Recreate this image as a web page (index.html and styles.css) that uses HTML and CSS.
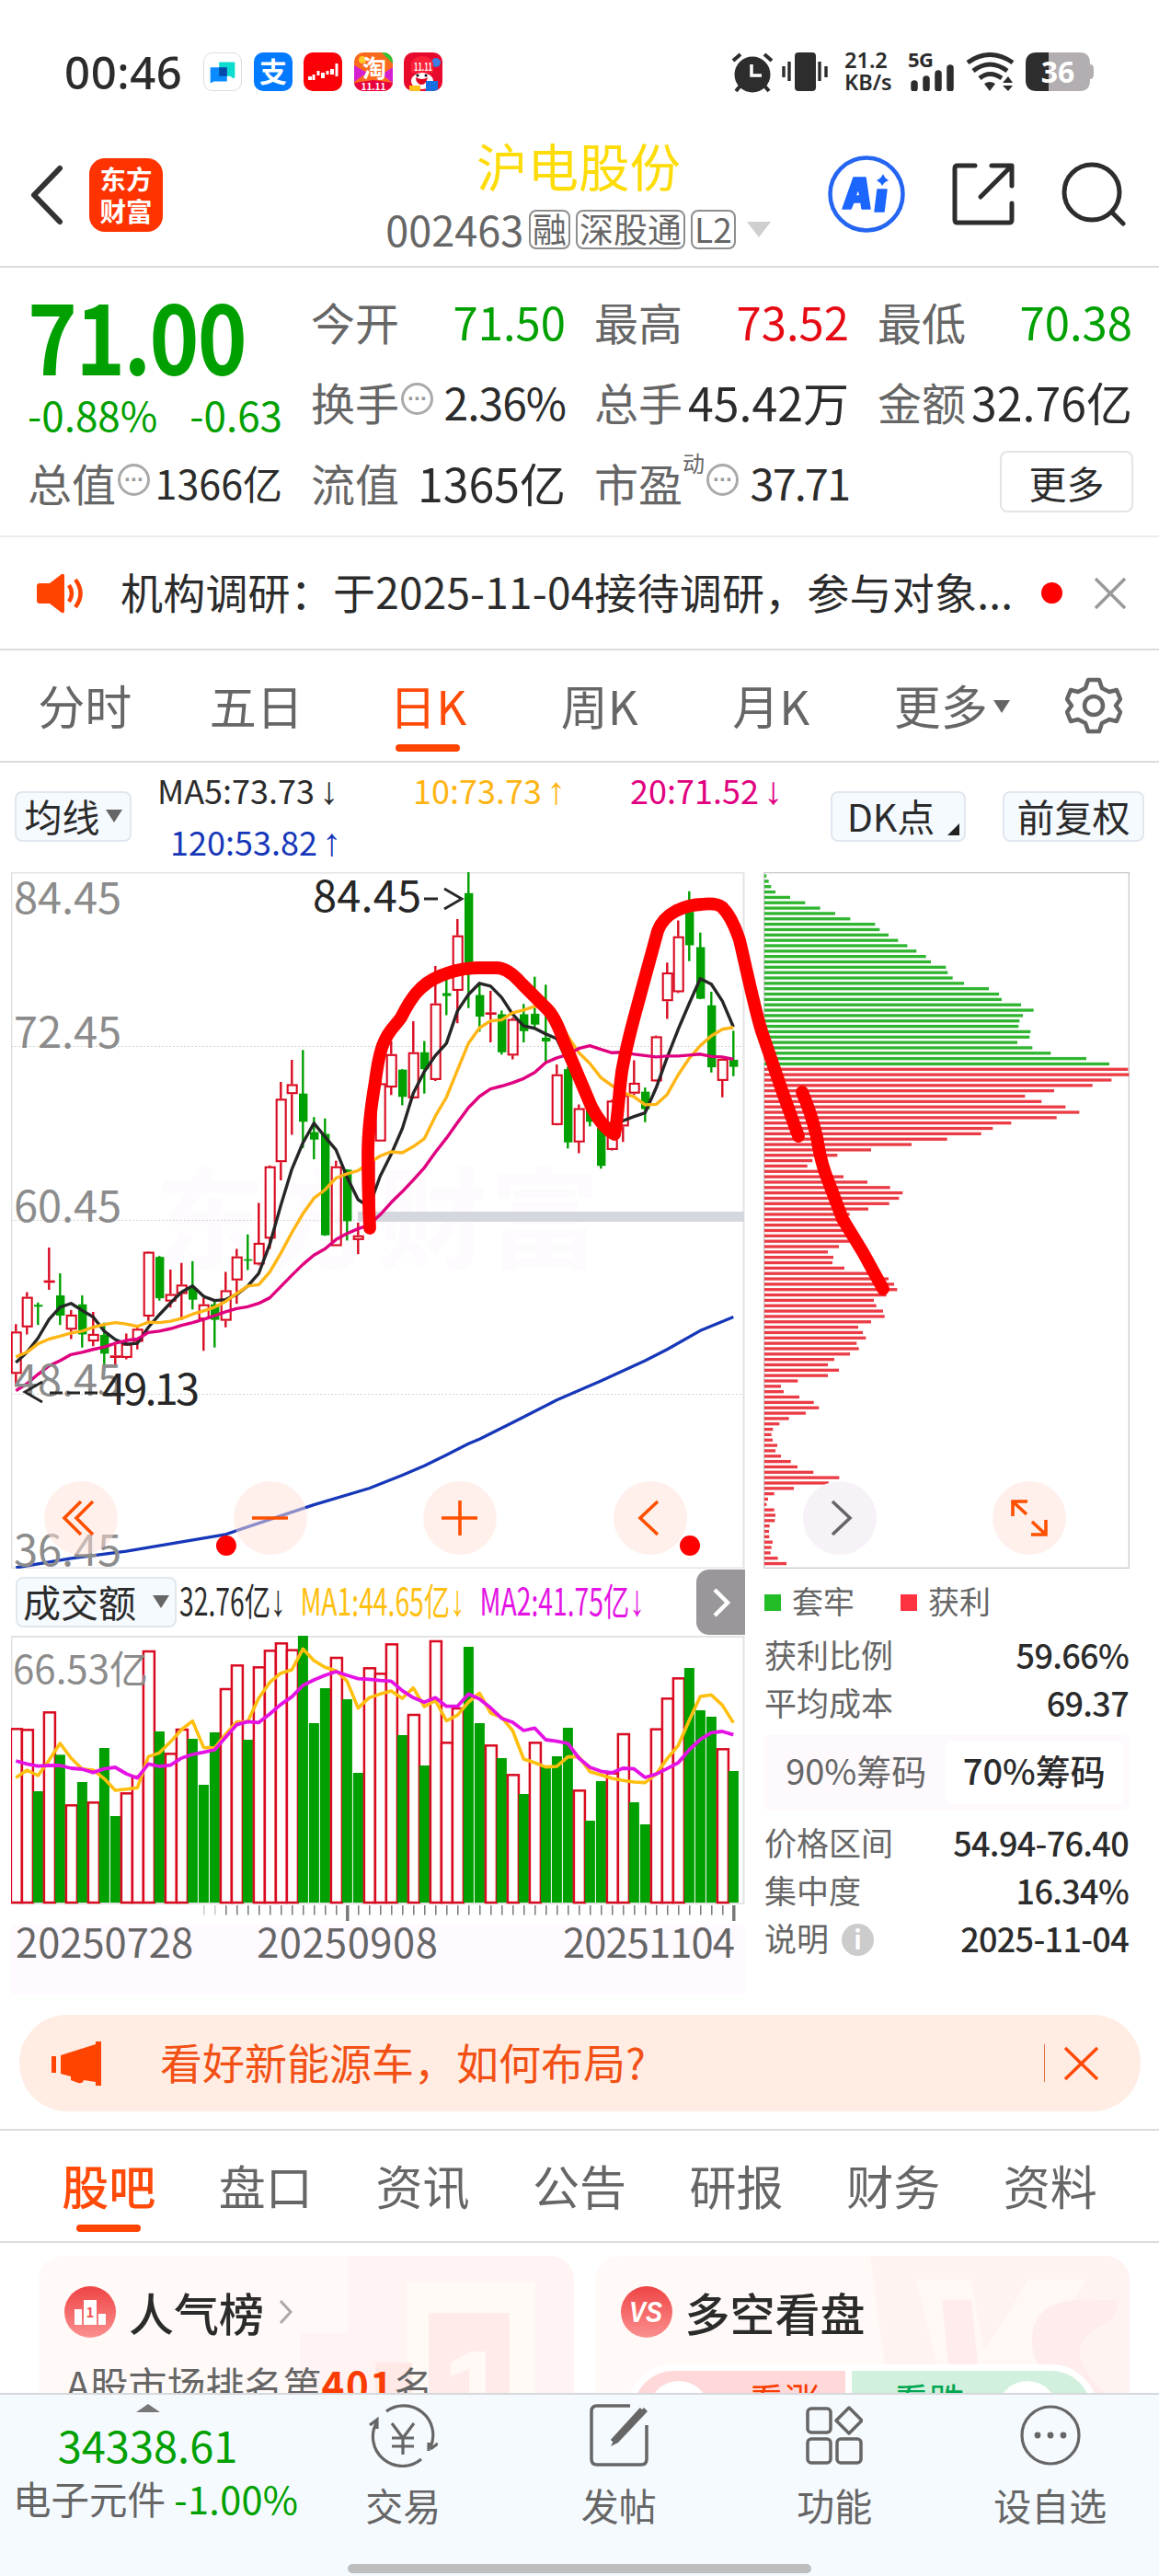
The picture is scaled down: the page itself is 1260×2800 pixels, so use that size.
FILE: index.html
```html
<!DOCTYPE html>
<html lang="zh-CN">
<head>
    <meta charset="UTF-8">
    <meta name="viewport" content="width=device-width, initial-scale=1.0">
    <title>沪电股份 002463</title>
    <link rel="stylesheet" href="styles.css">
</head>
<body>
    <!-- 状态栏 -->
    <div class="status">
        <span class="clock">00:46</span>
        <div class="apps">
            <svg class="app app-white" viewBox="0 0 42 42"><path d="M17 10h18v18h-3l-2-2H17z" fill="#0cdccf"/><path d="M7 16h19v16H11l-4 2z" fill="#0a8bff"/><path d="M17 16h9v10h-9z" fill="#044aa8"/></svg>
            <svg class="app" viewBox="0 0 42 42"><rect width="42" height="42" fill="#027aff"/><text x="21" y="32" font-size="30" font-weight="700" text-anchor="middle" fill="#fff">支</text></svg>
            <svg class="app" viewBox="0 0 42 42"><rect width="42" height="42" fill="#fb0007"/><g fill="#fff"><path d="M5 26h4v4H5zM19 22h4v6h-4zM29 18h4v6h-4z"/></g><path d="M11 24v6M16 20v5M26 20v4M36 12v14" stroke="#fff" stroke-width="3" fill="none"/></svg>
            <svg class="app" viewBox="0 0 42 42"><rect width="42" height="42" fill="#fb6a1c"/><path d="M0 14l14 8-14 10zM42 16L30 24l12 9z" fill="#d31fd0"/><path d="M30 0h12v12z" fill="#2fc437"/><circle cx="9" cy="8" r="4" fill="#ffc928"/><path d="M0 33l21-3 21 3v9H0z" fill="#e8003c"/><text x="22" y="27" font-size="26" font-weight="700" text-anchor="middle" fill="#fff">淘</text><text x="21" y="41" font-size="10" font-weight="700" text-anchor="middle" fill="#fff">11.11</text></svg>
            <svg class="app" viewBox="0 0 42 42"><rect width="42" height="42" fill="#e80a2c"/><circle cx="35" cy="11" r="5" fill="#3b7de0"/><path d="M8 22V12q3-8 12-8t12 8v10z" fill="#fb2238"/><text x="21" y="20" font-size="11" font-weight="700" text-anchor="middle" fill="#fff" textLength="20" lengthAdjust="spacingAndGlyphs">11.11</text><ellipse cx="20" cy="31" rx="12" ry="9" fill="#fff"/><path d="M13 27q7 4 13 0-2 9-8 8-5-2-5-8z" fill="#e2001f"/><circle cx="15" cy="25" r="1.5"/><circle cx="24" cy="25" r="1.5"/><path d="M6 36h12v6H6z" fill="#ffc21a"/><path d="M24 31h13v11H24z" fill="#1a6fe0"/></svg>
        </div>
        <div class="signals">
            <svg width="46" height="44" viewBox="0 0 46 44"><circle cx="23" cy="24" r="19.5" fill="#2d2d2d"/><path d="M2 9l8-7M44 9l-8-7M5 42l6-7M41 42l-6-7" stroke="#2d2d2d" stroke-width="4"/><path d="M22 13v12h11" stroke="#fff" stroke-width="3.5" fill="none"/></svg>
            <svg class="vib" width="50" height="42" viewBox="0 0 50 42"><rect x="14" width="23" height="42" rx="4" fill="#2d2d2d"/><path d="M2 15v12M8 10v21M41 10v21M48 15v12" stroke="#2d2d2d" stroke-width="3.4"/></svg>
            <span class="speed">21.2<br>KB/s</span>
            <svg width="52" height="42" viewBox="0 0 52 42"><text x="0" y="16" font-size="22" font-weight="700" fill="#2d2d2d" textLength="28" font-family="Noto Sans">5G</text><path d="M7 34v5M20 29v10M33 23v16M46 17v22" stroke="#2d2d2d" stroke-width="7.5" stroke-linecap="round"/></svg>
            <svg class="wifi" width="54" height="42" viewBox="0 0 54 42"><path d="M2 11q24-17 49 0M8 20q18-14 37 0M15 28q11-9 24 0" stroke="#2d2d2d" stroke-width="5" fill="none"/><path d="M20 34q6-4 12 0l-6 8zM40 33l6-7 5 7zM40 36h11l-5 6z" fill="#2d2d2d"/></svg>
            <svg width="75" height="42" viewBox="0 0 75 42"><path d="M12 0h13v42H12Q0 42 0 30V12Q0 0 12 0z" fill="#2d2d2d"/><path d="M25 0h34q11 0 11 12v1q4 0 4 5v6q0 5-4 5v1q0 12-11 12H25z" fill="#b3aeb2"/><text x="35" y="33" font-size="32" font-weight="700" text-anchor="middle" fill="#fff" font-family="Open Sans">36</text></svg>
        </div>
    </div>

    <!-- 顶部标题 -->
    <header>
        <svg class="back" width="40" height="66" viewBox="0 0 40 66"><path d="M35 4L7 33l28 29" fill="none" stroke="#333" stroke-width="6" stroke-linecap="round" stroke-linejoin="round"/></svg>
        <div class="logo">东方<br>财富</div>
        <div class="stock">
            <h1>沪电股份</h1>
            <div class="code">002463<span class="tag">融</span><span class="tag">深股通</span><span class="tag">L2</span><i class="down"></i></div>
        </div>
        <div class="tools">
            <svg width="84" height="84" viewBox="0 0 84 84"><circle cx="42" cy="42" r="39.5" fill="none" stroke="#2466f2" stroke-width="4.5"/><path d="M28 24h13l5 34h-9l-1-7h-8l-3 7h-9zM33 36l-3 8h5zM54 37h10l-3 24h-10z" fill="#1b66ff" stroke="#1b66ff" stroke-width="1.5" stroke-linejoin="round" fill-rule="evenodd"/><path d="M60 20q2 5 6 7-5 2-7 6-2-4-6-6 5-2 7-7z" fill="#1b66ff"/></svg>
            <svg width="68" height="68" viewBox="0 0 68 68" fill="none" stroke="#2d2d2d" stroke-width="5" stroke-linecap="round" stroke-linejoin="round"><path d="M25 3H6Q3 3 3 6v56q0 3 3 3h56q3 0 3-3V44M43 3h22v22M64 4L31 37"/></svg>
            <svg width="70" height="70" viewBox="0 0 70 70" fill="none" stroke="#2d2d2d" stroke-width="5" stroke-linecap="round"><circle cx="33" cy="33" r="30"/><path d="M55 55l12 12"/></svg>
        </div>
    </header>

    <!-- 行情 -->
    <section class="quote">
        <div class="price">71.00</div>
        <div class="cell"><span>今开</span><b class="green">71.50</b></div>
        <div class="cell"><span>最高</span><b class="red">73.52</b></div>
        <div class="cell"><span>最低</span><b class="green">70.38</b></div>
        <div class="cell change"><b class="green">-0.88%</b><b class="green">-0.63</b></div>
        <div class="cell"><span>换手<i class="dots">···</i></span><b class="m">2.36%</b></div>
        <div class="cell"><span>总手</span><b class="w">45.42万</b></div>
        <div class="cell"><span>金额</span><b class="w">32.76亿</b></div>
        <div class="cell"><span>总值<i class="dots">···</i></span><b class="s">1366亿</b></div>
        <div class="cell"><span>流值</span><b class="w">1365亿</b></div>
        <div class="cell"><span>市盈<sup>动</sup><i class="dots">···</i></span><b class="pe">37.71</b></div>
        <div class="cell last"><button class="more">更多</button></div>
    </section>

    <!-- 公告 -->
    <section class="notice">
        <svg width="52" height="44" viewBox="0 0 52 44"><path d="M3 11h11L27 1q3-1 3 2v38q0 3-3 2L14 33H3q-3 0-3-3V14q0-3 3-3z" fill="#ff4400"/><path d="M35 13q6 9 0 18M42 7q11 15 0 30" fill="none" stroke="#ff4400" stroke-width="4.5"/></svg>
        <p>机构调研：于2025-11-04接待调研，参与对象...</p>
        <i class="dot"></i>
        <svg width="36" height="36" viewBox="0 0 36 36"><path d="M2 2l32 32M34 2L2 34" stroke="#999" stroke-width="3.5"/></svg>
    </section>

    <!-- 周期 -->
    <nav class="period">
        <a>分时</a><a>五日</a><a class="on">日K</a><a>周K</a><a>月K</a><a>更多<i class="tri"></i></a>
        <svg width="62" height="62" viewBox="0 0 62 62" fill="none" stroke="#666" stroke-width="4.5" stroke-linejoin="round"><path d="M25 3h12l3 9 8 4 8-2 4 10-5 7 5 7-4 10-8-2-8 4-3 9H25l-3-9-8-4-8 2-4-10 5-7-5-7 4-10 8 2 8-4z"/><circle cx="31" cy="31" r="10"/></svg>
    </nav>

    <!-- 均线指标 -->
    <section class="indicators">
        <button class="pill">均线<i class="tri"></i></button>
        <div class="ma">
            <span>MA5:73.73<em>↓</em></span>
            <span class="c10">10:73.73<em>↑</em></span>
            <span class="c20">20:71.52<em>↓</em></span>
            <span class="c120">120:53.82<em>↑</em></span>
        </div>
        <button class="pill dk">DK点<i class="corner"></i></button>
        <button class="pill fq">前复权</button>
    </section>

    <!-- K线 + 筹码 -->
    <section class="charts">
        <div class="left">
            <svg id="kline" width="798" height="757" viewBox="12 948 798 757"></svg>
            <div class="vol-head">
                <button class="pill">成交额<i class="tri"></i></button>
                <div class="vol-ma"><span>32.76亿<em>↓</em></span><span class="v1">MA1:44.65亿<em>↓</em></span><span class="v2">MA2:41.75亿<em>↓</em></span></div>
                <div class="next"><svg width="22" height="34" viewBox="0 0 22 34"><path d="M4 3l14 14L4 31" fill="none" stroke="#fff" stroke-width="4.5"/></svg></div>
            </div>
            <svg id="volume" width="798" height="314" viewBox="12 1778 798 314"></svg>
            <div class="dates"><span>20250728</span><span>20250908</span><span>20251104</span></div>
        </div>
        <div class="right">
            <svg id="chips" width="398" height="757" viewBox="830 948 398 757"></svg>
            <div class="legend"><i class="sq g"></i>套牢<i class="sq r"></i>获利</div>
            <div class="row"><span>获利比例</span><b>59.66%</b></div>
            <div class="row"><span>平均成本</span><b>69.37</b></div>
            <div class="toggle"><span>90%筹码</span><b>70%筹码</b></div>
            <div class="row"><span>价格区间</span><b>54.94-76.40</b></div>
            <div class="row"><span>集中度</span><b>16.34%</b></div>
            <div class="row"><span>说明<i class="info">i</i></span><b>2025-11-04</b></div>
        </div>

        <div class="controls">
            <a><svg viewBox="0 0 80 80"><path d="M40 22L22 40l18 18M53 22L35 40l18 18"/></svg></a>
            <a><svg viewBox="0 0 80 80"><path d="M20 40h39"/></svg></a>
            <a><svg viewBox="0 0 80 80"><path d="M20 40h39M40 21v38"/></svg></a>
            <a><svg viewBox="0 0 80 80"><path d="M48 22L29 40l19 18"/></svg></a>
            <a class="gray"><svg viewBox="0 0 80 80"><path d="M32 22l19 18-19 18"/></svg></a>
            <a><svg viewBox="0 0 80 80"><path d="M37 36L22 22M38 22H22v16M43 44l15 14M42 58h16V42" stroke-width="4.4"/></svg></a>
        </div>

        <!-- 手绘标记 -->
        <svg class="marks" width="1260" height="757" viewBox="0 948 1260 757">
            <g fill="none" stroke="#ff0000" stroke-width="13.8" stroke-linecap="round" stroke-linejoin="round">
                <path d="M402 1335Q400 1290 400 1256T408 1175Q412 1145 417 1134C422 1120 430 1115 436 1106C446 1086 456 1070 478 1061Q500 1052 520 1052H540Q552 1052 567 1069L595 1097Q604 1106 613 1132L643 1203Q655 1226 668 1233C672 1215 672 1195 676 1165C682 1130 690 1105 697 1078L715 1012Q720 998 735 990Q750 983 763 983Q778 981 785 986Q796 997 804 1022C813 1060 820 1095 828 1121L850 1185L868 1235"/>
                <path d="M872 1187Q882 1210 888 1236Q892 1262 899 1280L916 1325L938 1361L960 1401"/>
            </g>
            <circle cx="246" cy="1680" r="11" fill="#ff0000"/>
            <circle cx="750" cy="1680" r="11" fill="#ff0000"/>
        </svg>
    </section>

    <!-- 广告条 -->
    <div class="banner">
        <svg width="54" height="48" viewBox="0 0 54 48" fill="#ff4400"><path d="M0 16h5v18H0zM10 15L48 3V0h6v48h-6v-4l-13-2q-1 4-6 3l-8-3v-4l-11-3z"/></svg>
        <p>看好新能源车，如何布局?</p>
        <i></i>
        <svg width="40" height="38" viewBox="0 0 40 38"><path d="M2 2l35 34M37 2L2 36" stroke="#ff4a08" stroke-width="3.5"/></svg>
    </div>

    <nav class="tabs">
        <a class="on">股吧</a><a>盘口</a><a>资讯</a><a>公告</a><a>研报</a><a>财务</a><a>资料</a>
    </nav>

    <section class="cards">
        <div class="card">
            <svg class="deco" width="582" height="149" viewBox="0 0 582 149"><path d="M336 0h246v149H284V84h52z" fill="#ffeff0" opacity=".6"/><path d="M400 28h140v121H400z" fill="#fffaf5"/><path d="M424 62h88v87h-88z" fill="#ffecea"/><path d="M448 116l22-12h16v45h-18v-26l-20 8z" fill="#fff8f4"/><path d="M366 116h40v33h-40z" fill="#ffe9e6"/></svg>
            <h3><svg width="56" height="56" viewBox="0 0 56 56"><circle cx="28" cy="28" r="28" fill="url(#rg)"/><path d="M11 25h8v17h-8zM21 15h14v27H21zM37 30h8v12h-8z" fill="#fff"/><text x="28" y="34" font-size="15" font-weight="700" text-anchor="middle" fill="#f05050">1</text></svg>人气榜<svg class="go" width="18" height="28" viewBox="0 0 18 28"><path d="M3 2l11 12L3 26" fill="none" stroke="#aaa" stroke-width="3"/></svg></h3>
            <p>A股市场排名第<b>401</b>名</p>
        </div>
        <div class="card">
            <svg class="deco" width="582" height="149" viewBox="0 0 582 149"><path d="M300 0h282v149H320z" fill="#ffefef" opacity=".7"/><path d="M350 26h60l14 78 48-78h62l-70 123H380z" fill="#fff8f5"/><path d="M378 48h32l10 101h-32zM548 48q-76-6-72 50 2 20 30 51h50q-52-46-8-72 24-8 20-29z" fill="#ffecec"/></svg>
            <h3><svg width="56" height="56" viewBox="0 0 56 56"><defs><linearGradient id="rg" x2="0" y2="1"><stop offset="0" stop-color="#ef4444"/><stop offset="1" stop-color="#fb9090"/></linearGradient></defs><circle cx="28" cy="28" r="28" fill="url(#rg)"/><text x="27" y="39" font-size="31" font-weight="700" font-style="italic" font-family="Liberation Sans" textLength="36" lengthAdjust="spacingAndGlyphs" text-anchor="middle" fill="#fff">VS</text></svg>多空看盘</h3>
            <div class="vs"><div class="up"><i></i>看涨</div><div class="dn">看跌<i></i></div></div>
        </div>
    </section>

    <!-- 底部导航 -->
    <footer>
        <div class="index">
            <i class="upt"></i>
            <strong>34338.61</strong>
            <p>电子元件 <b>-1.00%</b></p>
        </div>
        <a><svg width="76" height="70" viewBox="0 0 76 70" fill="none" stroke="#666" stroke-width="3.2"><path d="M20 9A32 32 0 0 1 68 48M58 61A32 32 0 0 1 10 20M68 50l8-6M66 52l0-9M2 24l8-6v10M26 22l12 16 12-16M38 38v18M26 38h24M26 47h24"/></svg>交易</a>
        <a><svg width="64" height="68" viewBox="0 0 64 68" fill="none" stroke="#666" stroke-width="3.5"><path d="M44 2H8Q2 2 2 8v52q0 6 6 6h48q6 0 6-6V23"/><path d="M59 4L27 38l-4 8 8-4L63 8z" fill="#666" stroke="none"/><path d="M57 6L25 41" stroke-width="6"/></svg>发帖</a>
        <a><svg width="62" height="66" viewBox="0 0 62 66" fill="none" stroke="#666" stroke-width="3.5"><rect x="2" y="4" width="25" height="26" rx="4"/><rect x="2" y="37" width="25" height="26" rx="4"/><rect x="34" y="37" width="26" height="26" rx="4"/><path d="M47 3l14 14-14 14-14-14z" stroke-linejoin="round"/></svg>功能</a>
        <a><svg width="66" height="66" viewBox="0 0 66 66"><circle cx="33" cy="33" r="31" fill="none" stroke="#666" stroke-width="3.2"/><g fill="#666"><circle cx="19" cy="33" r="3.4"/><circle cx="33" cy="33" r="3.4"/><circle cx="47" cy="33" r="3.4"/></g></svg>设自选</a>
        <div class="home"></div>
    </footer>

    <script>
        const X0 = 17.3, STEP = 12;
        const GREEN = "#00a000", RED = "#d90a20";
        const cx = i => X0 + i * STEP;
        const py = v => 930 + v / 1.96;      // 价格区
        const vy = v => 1700 + v / 3;        // 成交额区

        // [涨跌, 最高, 最低, 实体上, 实体下]
        const candles = [
            ["r",998,1126,1014,1104],["r",930,1020,940,1005],["g",952,1000,957,961],["r",835,925,905,910],["g",890,1000,937,980],
            ["r",968,1030,978,1010],["g",937,1048,956,1020],["r",972,1045,1019,1035],["g",995,1085,1021,1061],["r",1042,1085,1065,1070],
            ["r",1018,1073,1040,1070],["r",1003,1052,1008,1036],["r",843,995,844,982],["g",853,948,855,943],["r",882,963,934,950],
            ["r",868,990,914,934],["g",864,967,922,946],["r",943,1055,956,988],["g",950,1048,956,989],["r",887,1005,926,991],
            ["r",838,955,854,905],["g",807,883,860,863],["r",740,873,825,871],["r",660,838,662,816],["r",482,692,518,653],
            ["r",435,595,487,508],["g",414,623,507,567],["g",557,647,589,605],["g",560,810,593,809],["r",650,832,662,832],
            ["g",668,820,669,779],["r",782,849,809,819],["r",640,790,650,780],["r",480,609,485,609],["r",395,510,423,494],
            ["g",455,532,456,514],["r",353,518,419,517],["g",395,507,419,455],["r",235,480,315,478],["g",255,340,293,299],
            ["r",135,357,170,288],["g",35,325,80,230],["g",270,375,297,343],["r",288,398,334,338],["g",330,424,338,419],
            ["r",345,434,348,426],["g",316,398,338,374],["g",258,365,337,360],["g",275,440,388,396],["r",445,575,466,574],
            ["g",450,624,455,611],["r",530,634,538,611],["g",535,577,540,567],["g",575,667,580,661],["r",520,628,522,627],
            ["r",500,610,510,577],["r",436,510,484,507],["g",494,568,503,540],["r",383,482,385,481],["r",228,348,249,310],
            ["r",138,293,172,291],["g",76,225,120,191],["g",164,306,195,305],["g",290,462,319,451],["r",432,515,433,480],["g",373,470,435,450]
        ];
        const ma5 = [1080,1058,1028,988,962,954,969,983,1013,1031,1041,1039,1005,978,953,930,917,939,948,946,935,917,890,828,745,668,612,570,599,627,685,733,748,683,636,582,506,460,426,400,331,296,272,278,302,338,363,368,380,390,440,490,535,560,575,565,556,548,495,430,370,315,262,274,310,365];
        const ma10 = [1068,1058,1040,1030,1024,1017,1013,1005,999,995,998,1003,994,995,992,986,977,970,962,950,933,917,914,887,847,803,763,730,712,687,678,671,655,640,631,633,620,603,555,515,457,400,367,352,350,335,329,321,325,345,385,420,443,473,490,505,514,531,530,509,467,432,405,384,370,366];
        const ma20 = [1140,1125,1105,1087,1076,1063,1058,1052,1047,1039,1033,1030,1016,1013,1008,1001,995,988,980,972,965,961,954,942,918,894,871,851,838,818,805,795,787,765,739,716,691,665,632,602,569,537,513,497,491,484,475,462,441,431,424,411,405,413,420,419,423,426,429,427,427,425,423,428,429,434];
        const ma120 = [[0,1517],[5,1497],[10,1482],[19,1446],[27,1383],[32,1348],[35,1320],[37,1300],[39,1277],[41,1253],[42,1243],[45,1208],[49,1160],[53,1119],[57,1076],[59,1052],[62,1012],[65,983]];

        const vols = "r535 r538 g741 r481 g622 r784 g711 r775 g600 g822 r745 r690 r282 g546 r616 r537 g570 g720 g549 r405 r328 g573 r334 r280 r256 r278 g234 g519 g405 r303 g441 g681 r337 r355 r259 g558 r489 g657 r249 r580 r468 g270 g519 r589 g633 r685 g750 r580 g660 g627 g534 r736 g837 g708 r680 r552 g777 g849 r536 r436 r370 g339 g477 g498 r601 g675".split(" ");
        const vma1 = [697,672,690,640,585,633,668,672,700,738,734,730,628,616,580,540,512,598,600,555,515,514,437,386,356,345,277,315,337,348,382,470,436,424,414,438,404,465,445,511,493,450,421,486,500,543,636,648,662,660,629,629,677,688,699,706,711,713,685,635,592,510,432,427,460,518];
        const vma2 = [642,652,659,657,657,666,669,680,668,663,684,698,652,660,656,633,621,614,606,565,524,514,517,489,458,433,396,378,363,351,363,374,376,380,382,413,436,451,436,464,464,424,440,469,503,516,543,535,573,578,585,633,663,676,681,666,668,696,685,667,648,606,572,550,546,557];

        const trapped = [7,14,22,36,84,133,182,231,280,361,376,405,436,466,496,527,543,592,598,614,651,732,765,774,837,878,843,832,829,868,865,825,874,934,1050,1125];
        const profit = [1186,1189,1132,1070,945,850,904,982,1027,953,805,745,707,596,480,348,238,157,140,178,258,336,410,451,439,407,339,278,278,283,283,288,278,243,207,225,222,261,348,405,423,433,398,357,365,387,392,348,306,321,331,301,308,279,228,207,243,207,109,54,63,114,161,178,135,80,49,28,23,27,42,36,54,86,108,160,244,210,96,32,12,7,32,36,34,17,15,16,27,23,20,44,72];

        function line(pts, f, color, w) {
            const p = pts.map((v, i) => Array.isArray(v) ? `${cx(v[0])},${f(v[1])}` : `${cx(i)},${f(v)}`).join(" ");
            return `<polyline points="${p}" fill="none" stroke="${color}" stroke-width="${w}" stroke-linejoin="round"/>`;
        }

        function drawKline() {
            let s = `<text x="168" y="1370" font-size="120" font-weight="700" fill="#fefbfe" textLength="484">东方财富</text>`;
            s += `<rect x="12.5" y="948.5" width="796" height="756" fill="none" stroke="#e3e3e3" stroke-width="2"/>`;
            [1137.5, 1326.5, 1515.5].forEach(y => s += `<path d="M12 ${y}H809" stroke="#d4d4d4" stroke-dasharray="2 2"/>`);
            s += `<rect x="389" y="1317" width="420" height="11" fill="#d5d7df"/>`;
            candles.forEach(([c, h, l, t, b], i) => {
                const x = cx(i), col = c == "r" ? RED : GREEN;
                if (c == "r") {
                    s += `<path d="M${x} ${py(h)}V${py(t)}M${x} ${py(b)}V${py(l)}" stroke="${col}" stroke-width="2.4"/>`;
                    s += `<rect x="${x - 4.6}" y="${py(t) + 1}" width="10" height="${Math.max(py(b) - py(t) - 2, 0.5)}" fill="none" stroke="${col}" stroke-width="2.1"/>`;
                } else {
                    s += `<path d="M${x} ${py(h)}V${py(l)}" stroke="${col}" stroke-width="2.4"/>`;
                    s += `<rect x="${x - 4.3}" y="${py(t)}" width="9.4" height="${py(b) - py(t)}" fill="${col}"/>`;
                }
            });
            s += line(ma5, py, "#262626", 3.4) + line(ma10, py, "#ffb514", 3.4) + line(ma20, py, "#e0007f", 3.4) + line(ma120, py, "#1637b8", 3.3);
            [["84.45", 993], ["72.45", 1138.5], ["60.45", 1328], ["48.45", 1517], ["36.45", 1702]].forEach(([t, y]) => s += `<text class="axis" x="15" y="${y}" textLength="117">${t}</text>`);
            s += `<text class="peak" x="340" y="991" textLength="118">84.45</text><path d="M461 977h15M483 966l19 11-19 11" fill="none" stroke="#262626" stroke-width="2.8"/>`;
            s += `<text class="peak" x="111" y="1527" textLength="106">49.13</text><path d="M46 1502l-19 11 19 11M54 1514h14M73 1514h14M92 1514h14" fill="none" stroke="#262626" stroke-width="2.8"/>`;
            document.getElementById("kline").innerHTML = s;
        }

        function drawVolume() {
            let s = `<rect x="12.5" y="1779" width="796" height="290" fill="#fff" stroke="#e3e3e3" stroke-width="2"/>`;
            vols.forEach((v, i) => {
                const x = cx(i), y = vy(+v.slice(1));
                if (v[0] == "r") s += `<rect x="${x - 5.4}" y="${y + 1}" width="12" height="${2067 - y}" fill="#fff" stroke="${RED}" stroke-width="2.5"/>`;
                else s += `<rect x="${x - 5.4}" y="${y}" width="11" height="${2068 - y}" fill="${GREEN}"/>`;
                if (i > 16) s += `<path d="M${x + .5} 2071V${i == 30 || i == 65 ? 2088 : 2081.5}" stroke="#777" stroke-opacity="${i < 19 ? .4 : 1}" stroke-width="${i == 30 || i == 65 ? 3.4 : 1.5}"/>`;
            });
            s += `<text class="axis" x="14" y="1830" textLength="147">66.53亿</text>`;
            s += line(vma1, vy, "#ffbf0f", 3.6) + line(vma2, vy, "#e413e4", 3.8);
            document.getElementById("volume").innerHTML = s;
        }

        function drawChips() {
            let s = `<rect x="830.5" y="948.5" width="397" height="756" fill="#fff" stroke="#c9c9c9" stroke-width="1.6"/>`;
            trapped.concat(profit).forEach((w, i) => {
                s += `<rect x="831" y="${950.4 + i * 5.84}" width="${w / 3}" height="3.3" fill="${i < trapped.length ? "#2fb52f" : "#eb3b44"}"/>`;
            });
            document.getElementById("chips").innerHTML = s;
        }

        drawKline();
        drawVolume();
        drawChips();
    </script>
</body>
</html>
```
FILE: styles.css
```css
* { box-sizing: border-box; }
body { margin: 0; width: 1260px; height: 2800px; overflow: hidden; background: #fff; color: #2b2b2b; font-family: "Noto Sans CJK SC", "Noto Sans", sans-serif; }
i, em { font-style: normal; }
b { font-weight: 400; }
h1, h3, p { margin: 0; }
button { padding: 0; font-family: inherit; color: inherit; }
svg { display: block; flex: none; }
.green { color: #00a000; }
.red { color: #e60a14; }

/* 状态栏 */
.status { height: 157px; padding: 57px 70px 0; display: flex; align-items: flex-start; }
.clock { font-family: "Noto Sans", sans-serif; font-size: 49px; line-height: 42px; width: 151px; font-weight: 500; letter-spacing: 0.6px; }
.apps { display: flex; gap: 12.6px; }
.app { width: 42px; height: 42px; border-radius: 10px; }
.app-white { border: 1px solid #ddd; }
.signals { margin-left: auto; display: flex; }
.vib { margin-left: 9px; }
.speed { font-family: "Noto Sans", sans-serif; font-size: 23.5px; font-weight: 600; line-height: 24px; margin: -4px 17px 0 18px; width: 52px; white-space: nowrap; }
.wifi { margin: 0 11px; }

/* 标题 */
header { height: 134px; border-bottom: 2px solid #dcdcdc; display: flex; position: relative; padding-left: 30px; }
.back { margin: 22px 27px 0 0; }
.logo { margin-top: 15px; width: 80px; height: 80px; border-radius: 17px; background: #ff3300; color: #fff; font-size: 28.5px; font-weight: 700; line-height: 35px; padding-top: 4px; text-align: center; }
.stock { width: 500px; margin-left: 203px; text-align: center; }
h1 { font-size: 55.5px; font-weight: 400; line-height: 55px; color: #fddc0a; margin-top: -5px; margin-left: -2px; }
.code { display: flex; align-items: center; justify-content: center; font-size: 45px; line-height: 44px; color: #666; margin-top: 20px; margin-left: -3px; }
.tag { font-size: 37px; line-height: 37px; border: 2px solid #8e8e8e; border-radius: 8px; padding: 0 2px; margin-left: 6px; height: 43px; }
.down { margin-left: 12px; border: 13px solid transparent; border-top: 17px solid #cfcfcf; border-bottom: 0; }
.tools { margin-left: 20px; margin-top: 12px; display: flex; align-items: center; height: 84px; gap: 51px; }

/* 行情 */
.quote { height: 293px; border-bottom: 2px solid #ececec; padding: 14px 29px 0 30px; display: grid; grid-template-columns: repeat(4, 277px); grid-template-rows: 87px 88px 87px; column-gap: 31px; }
.price { color: #00a000; font-weight: 700; font-size: 104px; line-height: 106px; letter-spacing: -2px; padding-top: 5px; transform: scaleX(0.88); transform-origin: left; }
.cell { display: flex; align-items: center; justify-content: space-between; white-space: nowrap; }
.cell span { font-size: 48px; color: #666; display: flex; align-items: center; }
.cell b { font-size: 49px; }
.cell b.m { font-size: 48px; letter-spacing: -1px; }
.cell b.w { font-size: 50px; }
.cell b.s { font-size: 43px; }
.cell b.pe { font-size: 47px; letter-spacing: -2px; }
.change { padding-top: 28px; }
.change b { font-size: 44px; }
.dots { width: 35px; height: 35px; border: 3px solid #aaa; border-radius: 50%; font-size: 24px; line-height: 28px; text-align: center; color: #999; margin: -5px 0 0 2px; letter-spacing: -1px; display: flex; justify-content: center; font-family: "Liberation Sans", sans-serif; font-weight: 700; }
.cell sup { font-size: 24px; line-height: 24px; margin-top: -42px; }
.last { justify-content: flex-end; }
.more { width: 145px; height: 67px; border: 2px solid #e4e4e4; border-radius: 8px; background: #fff; font-size: 41px; line-height: 58px; margin-right: -1px; }

.notice { height: 123px; border-bottom: 2px solid #dcdcdc; display: flex; align-items: center; padding: 0 35px 0 40px; }
.notice p { font-size: 46px; margin: -6px 0 0 39px; flex: 1; white-space: nowrap; letter-spacing: 0.2px; }
.dot { width: 23px; height: 23px; border-radius: 50%; background: #f00; margin-right: 34px; }

/* 周期 */
.period { height: 122px; border-bottom: 2px solid #dcdcdc; display: flex; align-items: center; }
.period a { width: 186.5px; text-align: center; font-size: 51px; line-height: 118px; height: 120px; color: #666; position: relative; left: -1px; white-space: nowrap; }
.period a:nth-child(6) { padding-left: 20px; }
.period svg { margin-left: 39px; }
nav a.on { color: #ff4a08; }
nav a.on::after { content: ""; position: absolute; bottom: 10px; left: 50%; margin-left: -35px; width: 70px; height: 8px; border-radius: 4px; background: #ff4400; }
.tri { display: inline-block; border: 9px solid transparent; border-top: 14px solid #666; border-bottom: 0; vertical-align: middle; margin-left: 6px; margin-top: -12px; }

/* 指标 */
.indicators { height: 118px; display: flex; padding-left: 16px; }
.pill { border: 2px solid #e1e7ee; border-radius: 8px; background: #f5faff; height: 55px; font-size: 41px; line-height: 46px; white-space: nowrap; position: relative; padding-bottom: 3px; }
.indicators .pill { width: 127px; margin-top: 31px; }
.indicators .dk { width: 147px; padding-right: 16px; }
.indicators .fq { width: 154px; margin-left: 40px; }
.ma { width: 732px; margin-left: 28px; padding-top: 6px; font-size: 36px; line-height: 46px; display: grid; grid-template-columns: 278px 236px 200px; grid-template-rows: 56px 56px; }
.ma em, .vol-ma em { font-family: "Liberation Sans", sans-serif; }
.ma em { font-size: 42px; line-height: 40px; margin-left: 5px; }
.vol-ma em { font-size: 48px; line-height: 40px; }
.c10 { color: #ffb514; }
.c20 { color: #e0007f; }
.c120 { color: #1637b8; margin-left: 14px; }
.corner { position: absolute; right: 5px; bottom: 5px; border-left: 13px solid transparent; border-bottom: 13px solid #222; }

/* 图表 */
.charts { position: relative; display: flex; gap: 20px; padding-left: 12px; height: 1242px; margin-top: 1px; }
.left { width: 798px; }
.right { width: 398px; }
.axis { font-size: 47px; fill: #8c8c8c; }
#volume .axis { font-size: 42px; }
.peak { font-size: 47px; fill: #262626; }
.vol-head { height: 73px; display: flex; align-items: center; padding-left: 5px; position: relative; }
.vol-head .pill { width: 175px; }
.vol-head .tri { margin-left: 18px; }
.vol-ma { font-size: 41px; white-space: nowrap; transform: scaleX(0.69); transform-origin: left; display: flex; gap: 23px; margin: -8px 0 0 3px; width: 560px; }
.v1 { color: #ffbf0f; }
.v2 { color: #e413e4; }
.next { position: absolute; right: 0; top: 1px; width: 53px; height: 71px; background: #99979a; border-radius: 14px 0 0 14px; display: flex; align-items: center; justify-content: center; }
.dates { height: 76px; padding: 0 12px 0 5px; background: #fffaff; display: flex; color: #666; font-size: 43.5px; line-height: 36px; }
.dates span:nth-child(2) { margin-left: 69px; letter-spacing: 0.5px; }
.dates span:nth-child(3) { margin-left: auto; letter-spacing: -0.9px; }
.legend { height: 69px; display: flex; align-items: center; font-size: 34px; color: #666; }
.sq { width: 18px; height: 18px; margin: 5px 12px 0 1px; }
.sq.g { background: #22bd27; }
.sq.r { background: #ff333f; margin-left: 50px; }
.row { height: 52px; display: flex; justify-content: space-between; align-items: center; font-size: 35px; line-height: 46px; color: #666; padding: 0 1px 5px; }
.row b, .toggle b { font-weight: 500; color: #2b2b2b; }
.row b { font-size: 36px; letter-spacing: -0.7px; }
.toggle { height: 82px; margin: 8px 0 10px; background: #fdf9fd; border-radius: 8px; padding: 7px; display: flex; font-size: 38px; line-height: 62px; color: #666; }
.toggle span, .toggle b { flex: 1; text-align: center; }
.toggle span { margin-left: -3px; }
.toggle b { background: #fff; border-radius: 6px; }
.info { display: inline-block; width: 35px; height: 35px; border-radius: 50%; background: #ccc; color: #fff; text-align: center; font-size: 28px; line-height: 33px; font-weight: 700; margin-left: 14px; vertical-align: 2px; }
.controls { position: absolute; left: 48px; top: 662px; display: flex; gap: 126.2px; }
.controls a { width: 80px; height: 80px; border-radius: 50%; background: rgba(255, 226, 217, 0.5); }
.controls path { fill: none; stroke: #ff5000; stroke-width: 3.6; }
.controls .gray { background: #f6f2f7; }
.controls .gray path { stroke: #666; }
.marks { position: absolute; left: 0; top: 0; }

/* 广告条 */
.banner { margin: 0 20px 0 21px; height: 105px; border-radius: 52px; background: #ffede4; display: flex; align-items: center; padding: 0 44px 0 35px; color: #f25014; }
.banner p { font-size: 46px; margin: -6px 0 0 64px; flex: 1; }
.banner i { width: 1px; height: 41px; background: #e87040; margin-right: 20px; }

.tabs { margin-top: 19px; height: 124px; border-top: 2px solid #dcdcdc; border-bottom: 2px solid #dcdcdc; display: flex; padding: 0 33px; }
.tabs a { flex: 1; text-align: center; font-size: 51px; line-height: 119px; color: #666; position: relative; }
.tabs .on { font-weight: 500; }

/* 卡片 */
.cards { display: flex; gap: 23px; padding: 14px 32px 0 42px; height: 163px; overflow: hidden; }
.card { width: 582px; height: 200px; border-radius: 26px; background: #fffaf7; overflow: hidden; position: relative; }
.deco { position: absolute; right: 0; top: 0; }
h3 { position: relative; display: flex; align-items: center; font-size: 49px; font-weight: 500; line-height: 54px; padding: 33px 0 0 28px; gap: 14px; }
.go { margin-left: 1px; }
.card p { position: relative; font-size: 42px; line-height: 60px; color: #666; margin: 20px 0 0 30px; white-space: nowrap; }
.card p b { font-weight: 700; color: #fa3c00; letter-spacing: 1.6px; }
.vs { position: absolute; left: 35px; top: 118px; width: 511px; height: 100px; border: 7px solid #fff; border-radius: 50px; display: flex; gap: 7px; background: #fff; font-size: 39px; line-height: 60px; }
.vs div { flex: 1; display: flex; }
.vs i { width: 66px; height: 66px; border-radius: 50%; background: #fff; margin-top: 11px; }
.up { background: #ffd9d9; color: #fa3c00; border-radius: 50px 0 0 50px; padding-left: 16px; gap: 43px; }
.dn { background: #d1f0dd; color: #00a651; border-radius: 0 50px 50px 0; padding-left: 45px; gap: 35px; }

/* 底部 */
footer { position: relative; height: 200px; background: #f5faff; border-top: 2px solid #d6d9dc; display: flex; color: #666; }
footer a { width: 234.5px; font-size: 41px; line-height: 56px; display: flex; flex-direction: column; align-items: center; }
footer a svg { height: 70px; margin: 9px 0 12px; }
.index { width: 321px; text-align: center; position: relative; }
.upt { position: absolute; left: 148px; top: 10px; border: 13px solid transparent; border-bottom: 9px solid #777; border-top: 0; }
.index strong { display: block; font-weight: 400; font-size: 47px; line-height: 60px; color: #00a000; margin-top: 24px; }
.index p { font-size: 41.5px; line-height: 56px; white-space: nowrap; margin-left: 14px; text-align: left; }
.index b { color: #00a000; letter-spacing: 0.3px; }
.home { position: absolute; left: 378px; bottom: 4px; width: 504px; height: 10px; border-radius: 5px; background: #bdbdbd; }
```
